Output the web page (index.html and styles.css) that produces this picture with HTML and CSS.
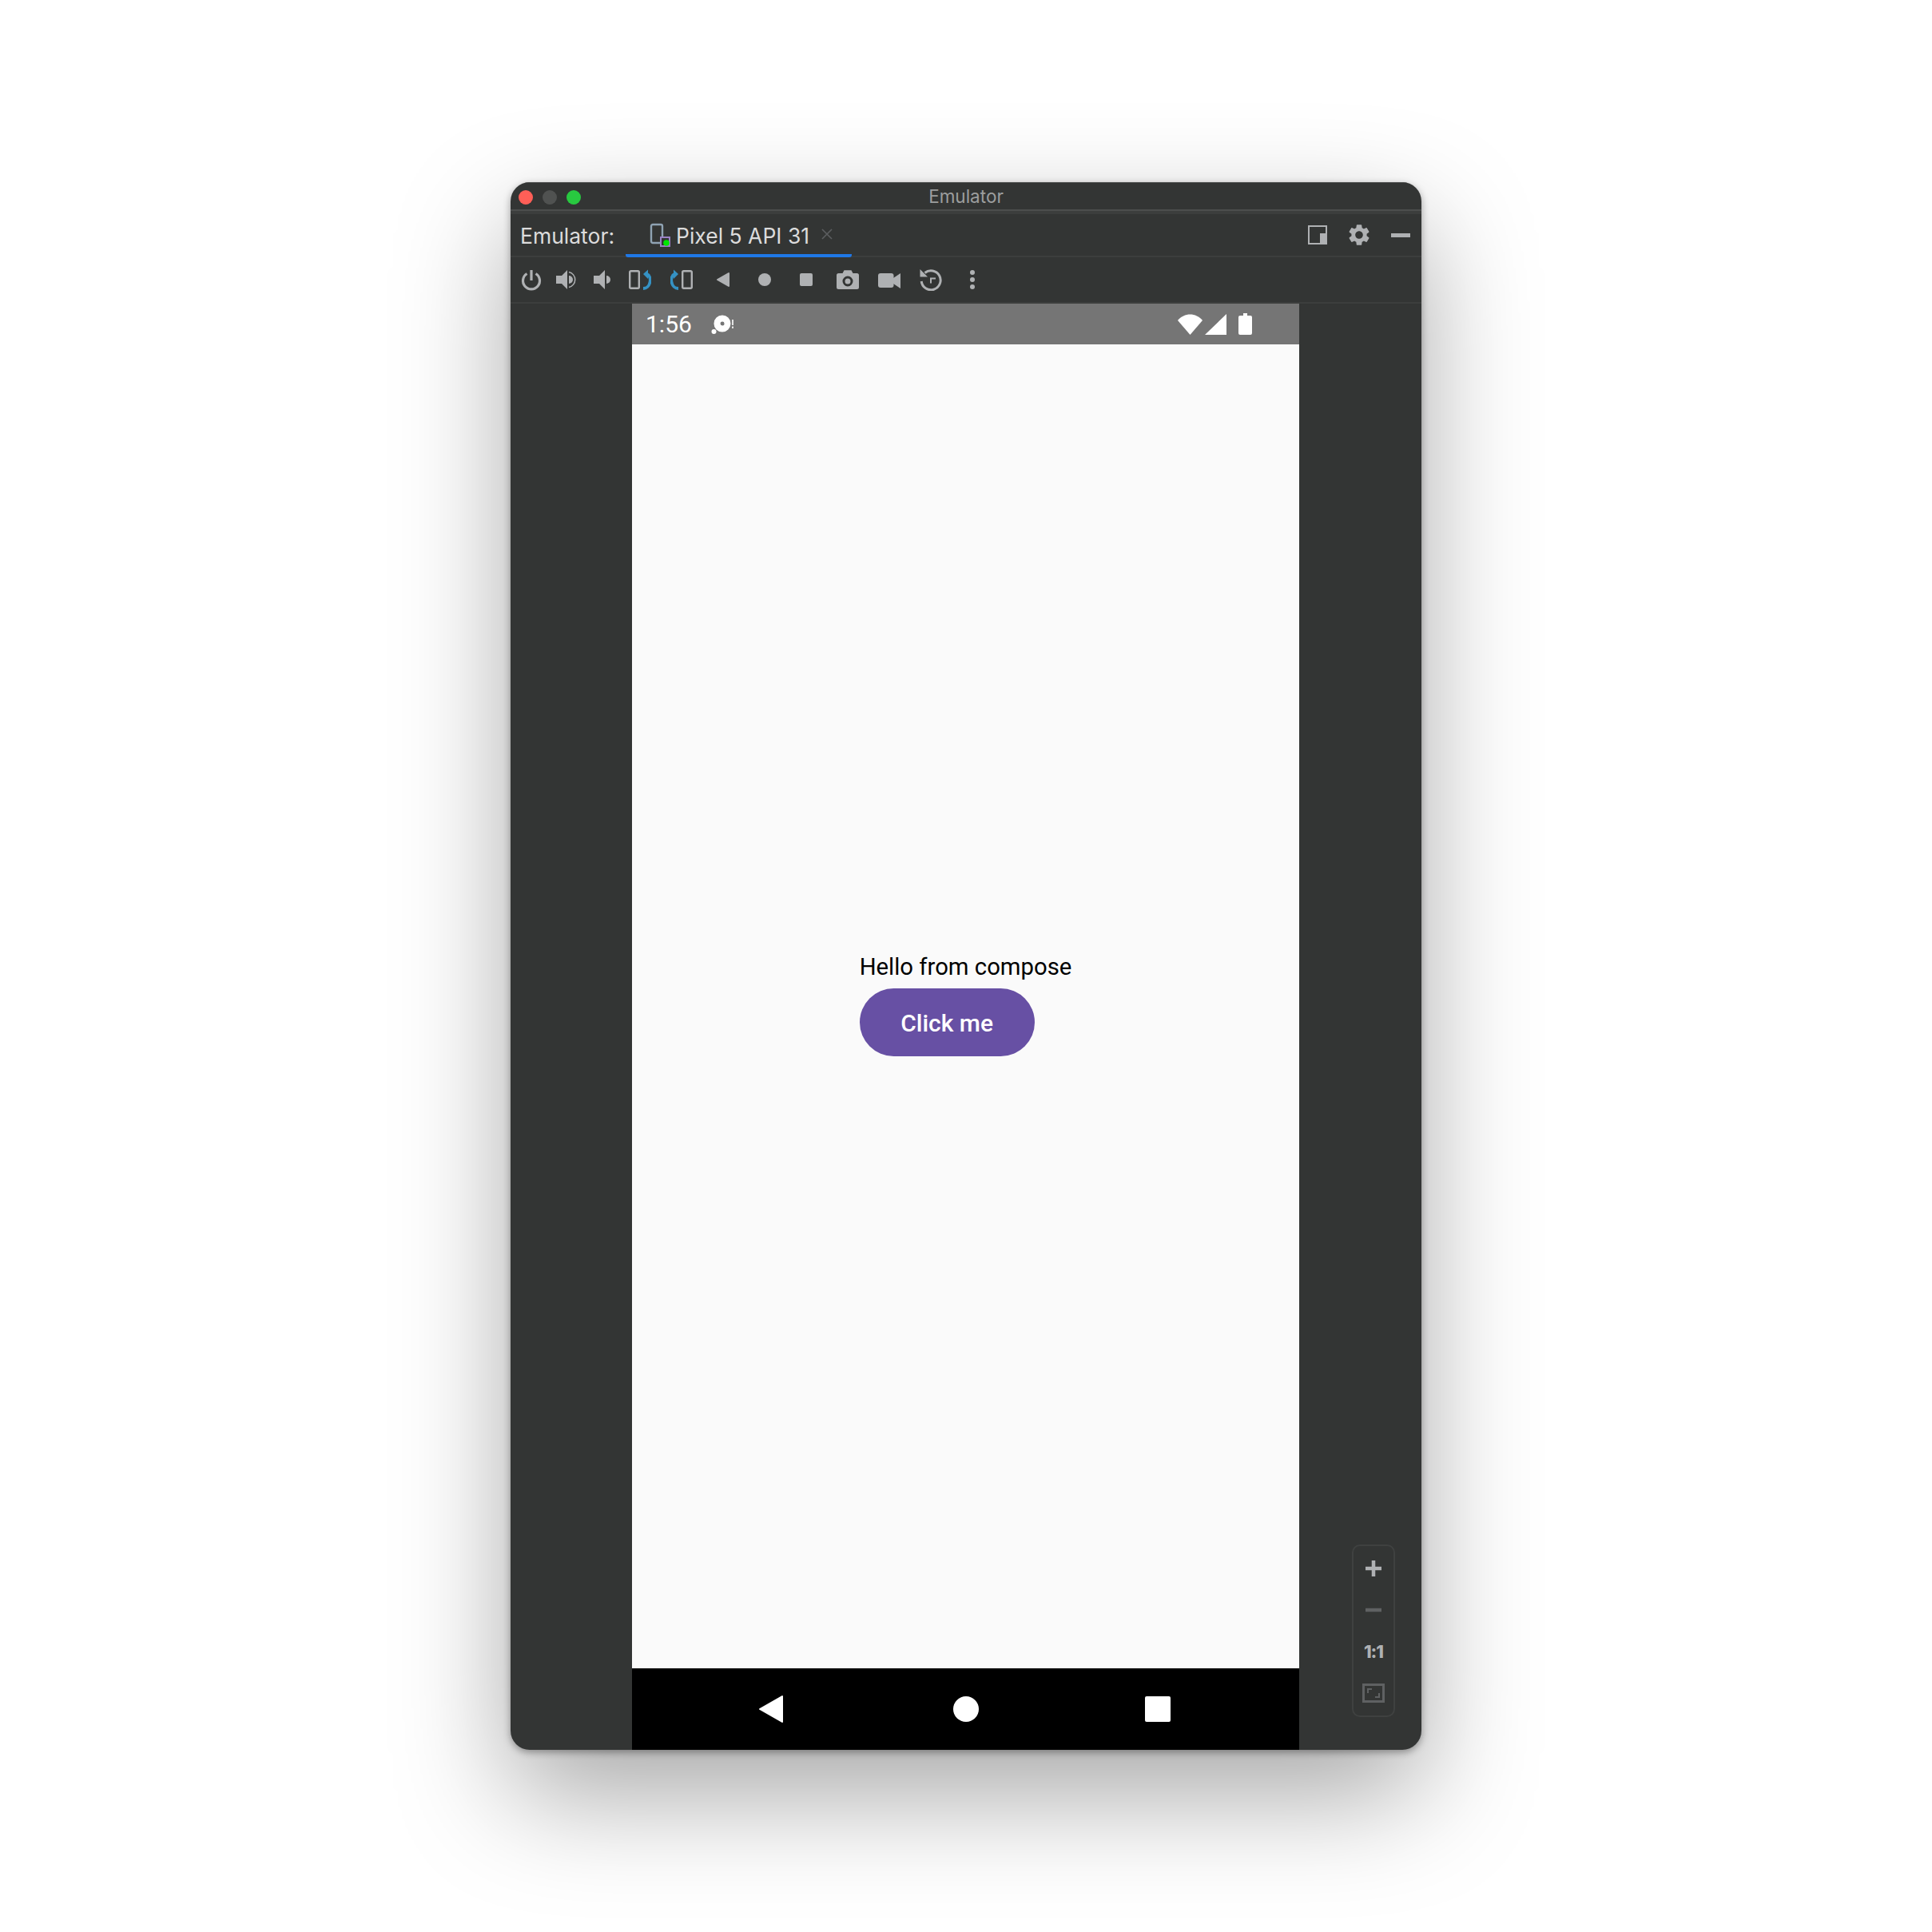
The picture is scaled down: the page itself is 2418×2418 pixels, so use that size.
FILE: index.html
```html
<!DOCTYPE html>
<html lang="en">
<head>
    <meta charset="UTF-8">
    <meta name="viewport" content="width=device-width, initial-scale=1.0">
    <title>Emulator</title>
    <link rel="stylesheet" href="styles.css">
</head>
<body>

    <div class="window">

        <!-- Barra de titulo -->
        <div class="titlebar">
            <div class="lights">
                <span class="light light-red"></span>
                <span class="light light-gray"></span>
                <span class="light light-green"></span>
            </div>
            <span class="title">Emulator</span>
        </div>

        <!-- Pestañas -->
        <div class="tabbar">
            <span class="tab-label">Emulator:</span>
            <div class="tab">
                <svg class="tab-icon" width="26" height="30" viewBox="0 0 26 30">
                    <rect x="2" y="2" width="14" height="23" rx="2" fill="none" stroke="#8fa3b3" stroke-width="2.4"/>
                    <rect x="14" y="18" width="11" height="11" fill="#333534" stroke="#9b82c4" stroke-width="2"/>
                    <circle cx="21" cy="25" r="3.8" fill="#00e600"/>
                </svg>
                <span class="tab-name">Pixel 5 API 31</span>
                <svg class="tab-close" width="14" height="14" viewBox="0 0 14 14">
                    <path d="M1 1L13 13M13 1L1 13" stroke="#5c5e60" stroke-width="1.6"/>
                </svg>
            </div>
            <div class="tab-actions">
                <div class="action">
                    <svg width="24" height="24" viewBox="0 0 24 24">
                        <rect x="1" y="1" width="22" height="22" fill="none" stroke="#afb1b3" stroke-width="2"/>
                        <rect x="15" y="10" width="9" height="14" fill="#afb1b3"/>
                    </svg>
                </div>
                <div class="action">
                    <svg width="32" height="32" viewBox="0 0 24 24">
                        <path fill="#afb1b3" fill-rule="evenodd" d="M19.14,12.94c0.04-0.3,0.06-0.61,0.06-0.94c0-0.32-0.02-0.64-0.07-0.94l2.03-1.58c0.18-0.14,0.23-0.41,0.12-0.61 l-1.92-3.32c-0.12-0.22-0.37-0.29-0.59-0.22l-2.39,0.96c-0.5-0.38-1.03-0.7-1.62-0.94L14.4,2.81c-0.04-0.24-0.24-0.41-0.48-0.41 h-3.84c-0.24,0-0.43,0.17-0.47,0.41L9.25,5.35C8.66,5.59,8.12,5.92,7.63,6.29L5.24,5.33c-0.22-0.08-0.47,0-0.59,0.22L2.74,8.87 C2.62,9.08,2.66,9.34,2.86,9.48l2.03,1.58C4.84,11.36,4.8,11.69,4.8,12s0.02,0.64,0.07,0.94l-2.03,1.58 c-0.18,0.14-0.23,0.41-0.12,0.61l1.92,3.32c0.12,0.22,0.37,0.29,0.59,0.22l2.39-0.96c0.5,0.38,1.03,0.7,1.62,0.94l0.36,2.54 c0.05,0.24,0.24,0.41,0.48,0.41h3.84c0.24,0,0.44-0.17,0.47-0.41l0.36-2.54c0.59-0.24,1.13-0.56,1.62-0.94l2.39,0.96 c0.22,0.08,0.47,0,0.59-0.22l1.92-3.32c0.12-0.22,0.07-0.47-0.12-0.61L19.14,12.94z M12,15.6c-1.98,0-3.6-1.62-3.6-3.6 s1.62-3.6,3.6-3.6s3.6,1.62,3.6,3.6S13.98,15.6,12,15.6z"/>
                    </svg>
                </div>
                <div class="action">
                    <span class="minimize"></span>
                </div>
            </div>
        </div>

        <!-- Barra de herramientas -->
        <div class="toolbar">
            <div class="tool">
                <svg width="28" height="28" viewBox="0 0 28 28">
                    <path d="M8.5 6.5A10.5 10.5 0 1 0 19.5 6.5" fill="none" stroke="#afb1b3" stroke-width="3.2"/>
                    <path d="M14 2V15" stroke="#afb1b3" stroke-width="3.2"/>
                </svg>
            </div>
            <div class="tool">
                <svg width="28" height="28" viewBox="0 0 28 28">
                    <polygon points="1,9 8,9 15,2 15,26 8,19 1,19" fill="#afb1b3"/>
                    <path d="M17 9A5 5 0 0 1 17 19Z" fill="#afb1b3"/>
                    <path d="M17 4.5A9.7 9.7 0 0 1 17 23.5" fill="none" stroke="#afb1b3" stroke-width="1.5"/>
                </svg>
            </div>
            <div class="tool">
                <svg width="28" height="28" viewBox="0 0 28 28">
                    <polygon points="4,9 11,9 18,2 18,26 11,19 4,19" fill="#afb1b3"/>
                    <path d="M20 9A5 5 0 0 1 20 19Z" fill="#afb1b3"/>
                </svg>
            </div>
            <div class="tool tool-wide">
                <svg width="28" height="28" viewBox="0 0 28 28">
                    <rect x="1.2" y="3.2" width="11.6" height="21.6" rx="1.5" fill="none" stroke="#afb1b3" stroke-width="2.4"/>
                    <polygon points="18,7 24,1.5 24,13" fill="#3592c4"/>
                    <path d="M22 6.5C26 8 27.5 13 26.5 17C25.5 22 22 25 18 25" fill="none" stroke="#3592c4" stroke-width="3.8"/>
                </svg>
            </div>
            <div class="tool tool-wide">
                <svg class="flip" width="28" height="28" viewBox="0 0 28 28">
                    <rect x="1.2" y="3.2" width="11.6" height="21.6" rx="1.5" fill="none" stroke="#afb1b3" stroke-width="2.4"/>
                    <polygon points="18,7 24,1.5 24,13" fill="#3592c4"/>
                    <path d="M22 6.5C26 8 27.5 13 26.5 17C25.5 22 22 25 18 25" fill="none" stroke="#3592c4" stroke-width="3.8"/>
                </svg>
            </div>
            <div class="tool tool-wide">
                <svg width="28" height="28" viewBox="0 0 28 28">
                    <polygon points="7,14 21,6 21,22" fill="#afb1b3" stroke="#afb1b3" stroke-width="2" stroke-linejoin="round"/>
                </svg>
            </div>
            <div class="tool tool-wide">
                <svg width="28" height="28" viewBox="0 0 28 28">
                    <circle cx="14" cy="14" r="8" fill="#afb1b3"/>
                </svg>
            </div>
            <div class="tool tool-wide">
                <svg width="28" height="28" viewBox="0 0 28 28">
                    <rect x="6" y="6" width="16" height="16" rx="2" fill="#afb1b3"/>
                </svg>
            </div>
            <div class="tool tool-wide">
                <svg width="28" height="28" viewBox="0 0 28 28">
                    <path d="M2.5 6H7.5L9.5 2.2H18.5L20.5 6H25.5A2.5 2.5 0 0 1 28 8.5V23.5A2.5 2.5 0 0 1 25.5 26H2.5A2.5 2.5 0 0 1 0 23.5V8.5A2.5 2.5 0 0 1 2.5 6Z" fill="#afb1b3"/>
                    <circle cx="14" cy="16" r="5" fill="none" stroke="#333534" stroke-width="3"/>
                </svg>
            </div>
            <div class="tool tool-wide">
                <svg width="28" height="28" viewBox="0 0 28 28">
                    <rect x="0" y="6" width="19.5" height="18" rx="3" fill="#afb1b3"/>
                    <polygon points="19,12 28,6 28,25 19,19" fill="#afb1b3"/>
                </svg>
            </div>
            <div class="tool tool-wide">
                <svg width="28" height="28" viewBox="0 0 28 28">
                    <path d="M6.5 5.5A12 12 0 1 1 2.2 16" fill="none" stroke="#afb1b3" stroke-width="3"/>
                    <polygon points="0.5,1 0.5,10.5 10,10.5" fill="#afb1b3"/>
                    <path d="M14 18.5V12.5H20" fill="none" stroke="#afb1b3" stroke-width="2"/>
                </svg>
            </div>
            <div class="tool tool-wide">
                <svg width="28" height="28" viewBox="0 0 28 28">
                    <circle cx="14" cy="5" r="3" fill="#afb1b3"/>
                    <circle cx="14" cy="14" r="3" fill="#afb1b3"/>
                    <circle cx="14" cy="23" r="3" fill="#afb1b3"/>
                </svg>
            </div>
        </div>

        <!-- Area del dispositivo -->
        <div class="stage">
            <div class="side"></div>

            <div class="phone">
                <div class="statusbar">
                    <span class="clock">1:56</span>
                    <svg class="disc" width="30" height="30" viewBox="0 0 30 30">
                        <path fill="#ffffff" fill-rule="evenodd" d="M15 3.5A10.5 10.5 0 1 1 14.9 24.5A10.5 10.5 0 0 1 15 3.5ZM15 11.5A2.5 2.5 0 1 0 15.1 16.5A2.5 2.5 0 0 0 15 11.5Z"/>
                        <circle cx="4.5" cy="24" r="3" fill="#ffffff"/>
                        <path d="M28 9V16M28 17.5V20" stroke="#ffffff" stroke-width="1.6"/>
                    </svg>
                    <div class="status-right">
                        <svg width="31" height="26" viewBox="0 0 31 26">
                            <path d="M0 8C8 -2 23 -2 31 8L15.5 26Z" fill="#ffffff"/>
                        </svg>
                        <svg width="27" height="26" viewBox="0 0 27 26">
                            <polygon points="0,26 27,0 27,26" fill="#ffffff"/>
                        </svg>
                        <svg class="battery" width="17" height="27" viewBox="0 0 17 27">
                            <path d="M6 0H11V3H15A2 2 0 0 1 17 5V25A2 2 0 0 1 15 27H2A2 2 0 0 1 0 25V5A2 2 0 0 1 2 3H6Z" fill="#ffffff"/>
                        </svg>
                    </div>
                </div>

                <div class="screen">
                    <div class="content">
                        <span class="hello">Hello from compose</span>
                        <button class="click-btn">Click me</button>
                    </div>
                </div>

                <div class="navbar">
                    <div class="nav-cell">
                        <svg class="nav-back" width="32" height="36" viewBox="0 0 32 36">
                            <polygon points="1,18 29,2 29,34" fill="#ffffff" stroke="#ffffff" stroke-width="2" stroke-linejoin="round"/>
                        </svg>
                    </div>
                    <div class="nav-cell"><span class="nav-home"></span></div>
                    <div class="nav-cell"><span class="nav-recent"></span></div>
                </div>
            </div>

            <div class="side side-right">
                <!-- Controles de zoom -->
                <div class="zoom-panel">
                    <div class="zoom-item">
                        <svg width="20" height="20" viewBox="0 0 20 20">
                            <path d="M0 10H20M10 0V20" stroke="#afb1b3" stroke-width="4.5"/>
                        </svg>
                    </div>
                    <div class="zoom-item">
                        <svg width="20" height="20" viewBox="0 0 20 20">
                            <path d="M0 10H20" stroke="#5f6162" stroke-width="4.5"/>
                        </svg>
                    </div>
                    <div class="zoom-item zoom-ratio">1:1</div>
                    <div class="zoom-item">
                        <svg width="28" height="24" viewBox="0 0 28 24">
                            <rect x="1.5" y="1.5" width="25" height="21" fill="none" stroke="#5f6162" stroke-width="3"/>
                            <path d="M7 12V7H12M21 12V17H16" fill="none" stroke="#5f6162" stroke-width="2"/>
                        </svg>
                    </div>
                </div>
            </div>
        </div>
    </div>

</body>
</html>
```
FILE: styles.css
```css
* {
    box-sizing: border-box;
}
body {
    margin: 0;
    height: 100vh;
    display: flex;
    justify-content: center;
    align-items: center;
    background-color: #ffffff;
    font-family: 'Inter', 'Roboto', sans-serif;
}
.window {
    width: 1140px;
    height: 1962px;
    display: flex;
    flex-direction: column;
    background-color: #333534;
    border-radius: 24px;
    overflow: hidden;
    box-shadow: 0 56px 140px rgba(0, 0, 0, 0.35), 0 3px 10px rgba(0, 0, 0, 0.35);
}
.titlebar {
    height: 40px;
    flex-shrink: 0;
    position: relative;
    display: flex;
    justify-content: center;
    align-items: center;
    padding-top: 1px;
    padding-bottom: 2px;
    border-bottom: 4px solid #3c3e3d;
    box-shadow: inset 0 -2px 0 #4c4e4d, inset 0 1px 0 #484a49;
}
.lights {
    position: absolute;
    left: 10px;
    top: 10px;
    display: flex;
    gap: 12px;
}
.light {
    width: 18px;
    height: 18px;
    border-radius: 50%;
}
.light-red {
    background-color: #ff5f57;
}
.light-gray {
    background-color: #505251;
}
.light-green {
    background-color: #28c940;
}
.title {
    font-size: 22.5px;
    color: #9c9e9e;
}
.tabbar {
    height: 54px;
    flex-shrink: 0;
    display: flex;
    align-items: center;
    padding-left: 12px;
    border-bottom: 2px solid #3c3e3d;
}
.tab-label {
    width: 132px;
    margin-top: 2px;
    font-size: 26.5px;
    color: #dcdcdc;
}
.tab {
    position: relative;
    height: 54px;
    width: 283px;
    display: flex;
    align-items: center;
    padding-left: 30px;
    border-bottom: 4px solid #1f78e6;
    border-radius: 3px;
    margin-top: 2px;
}
.tab-icon {
    margin-top: 2px;
}
.tab-name {
    margin-left: 7px;
    margin-top: 4px;
    font-size: 26.5px;
    color: #dcdcdc;
}
.tab-close {
    margin-left: 15px;
}
.tab-actions {
    margin-left: auto;
    display: flex;
}
.action {
    width: 52px;
    height: 52px;
    display: flex;
    justify-content: center;
    align-items: center;
}
.minimize {
    width: 24px;
    height: 5px;
    background-color: #afb1b3;
}
.toolbar {
    height: 58px;
    flex-shrink: 0;
    display: flex;
    align-items: center;
    padding-left: 4px;
    border-bottom: 2px solid #3c3e3d;
}
.tool {
    width: 44px;
    height: 56px;
    display: flex;
    justify-content: center;
    align-items: center;
}
.tool-wide {
    width: 52px;
}
.flip {
    transform: scaleX(-1);
}
.stage {
    flex: 1;
    display: flex;
    min-height: 0;
}
.side {
    width: 152px;
    flex-shrink: 0;
}
.side-right {
    width: 153px;
    display: flex;
    justify-content: flex-end;
    align-items: flex-end;
    padding: 0 33px 41px 0;
}
.phone {
    width: 835px;
    display: flex;
    flex-direction: column;
}
.statusbar {
    height: 51px;
    flex-shrink: 0;
    display: flex;
    align-items: center;
    padding: 0 59px 0 17px;
    background-color: #757575;
    color: #ffffff;
}
.clock {
    font-family: 'Roboto', sans-serif;
    font-size: 30px;
}
.disc {
    margin-left: 23px;
}
.status-right {
    margin-left: auto;
    display: flex;
    align-items: center;
    gap: 3px;
}
.battery {
    margin-left: 12px;
}
.screen {
    flex: 1;
    display: flex;
    justify-content: center;
    align-items: center;
    background-color: #fafafa;
}
.content {
    display: flex;
    flex-direction: column;
    align-items: flex-start;
}
.hello {
    height: 40px;
    line-height: 26px;
    font-family: 'Roboto', sans-serif;
    font-size: 29.3px;
    color: #000000;
}
.click-btn {
    width: 219px;
    height: 85px;
    padding-top: 3px;
    border: none;
    border-radius: 43px;
    background-color: #6750a4;
    color: #ffffff;
    font-family: 'Roboto', sans-serif;
    font-size: 30px;
    font-weight: 500;
}
.navbar {
    height: 102px;
    flex-shrink: 0;
    display: flex;
    justify-content: center;
    background-color: #000000;
}
.nav-cell {
    width: 240px;
    display: flex;
    justify-content: center;
    align-items: center;
}
.nav-back {
    margin-right: 5px;
}
.nav-home {
    width: 32px;
    height: 32px;
    border-radius: 50%;
    background-color: #ffffff;
}
.nav-recent {
    width: 32px;
    height: 32px;
    border-radius: 2px;
    background-color: #ffffff;
}
.zoom-panel {
    width: 54px;
    padding: 2px 0;
    border: 2px solid #3f4140;
    border-radius: 10px;
}
.zoom-item {
    height: 52px;
    display: flex;
    justify-content: center;
    align-items: center;
}
.zoom-ratio {
    font-family: 'Inter', sans-serif;
    font-size: 22px;
    font-weight: 800;
    letter-spacing: -1px;
    color: #afb1b3;
}
```
